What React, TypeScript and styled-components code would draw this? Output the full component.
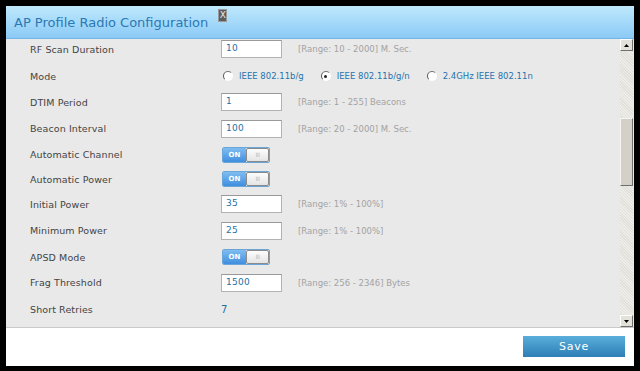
import React from 'react';
import styled, { createGlobalStyle } from 'styled-components';

const GlobalStyle = createGlobalStyle`
  html, body {
    margin: 0;
    padding: 0;
    background: #000;
  }
  body {
    font-family: "DejaVu Sans", Verdana, sans-serif;
  }
`;

const Screen = styled.div`
  width: 640px;
  height: 371px;
  padding: 6px;
  box-sizing: border-box;
  background: #000;
`;

const Dialog = styled.div`
  width: 628px;
  height: 360px;
  display: flex;
  flex-direction: column;
  background: #fff;
`;

const Header = styled.div`
  height: 32px;
  flex: none;
  display: flex;
  align-items: center;
  padding-left: 8px;
  background: linear-gradient(#bfe9fd, #8bcaf6);
  border-bottom: 1px solid #72b6e6;
`;

const Title = styled.h1`
  margin: 0;
  font-size: 13px;
  font-weight: normal;
  letter-spacing: 0;
  color: #2b78b4;
`;

const Close = styled.span`
  align-self: flex-start;
  margin: 3px 0 0 10px;
  width: 7px;
  height: 11px;
  background: #5c5c5c;
  border: 1px solid #9a9a9a;
  color: #e8e8e8;
  font-size: 9px;
  line-height: 11px;
  text-align: center;
`;

const Body = styled.div`
  height: 288px;
  flex: none;
  display: flex;
  background: #e9e9e9;
  border-bottom: 1px solid #c9c9c9;
`;

const Form = styled.div`
  flex: 1;
  overflow: hidden;
`;

const Rows = styled.div`
  margin-top: -4px;
  padding-left: 24px;
`;

const Row = styled.div<{ $h: number }>`
  height: ${p => p.$h}px;
  display: grid;
  grid-template-columns: 191px 1fr;
  align-items: center;
`;

const Label = styled.span`
  font-size: 9.5px;
  letter-spacing: 0.1px;
  color: #444;
`;

const Control = styled.div`
  display: flex;
  align-items: center;
`;

const Input = styled.div`
  width: 61px;
  height: 18px;
  box-sizing: border-box;
  border: 1px solid #b2b2b2;
  border-top-color: #999;
  background: #fff;
  padding-left: 4px;
  font-size: 9px;
  line-height: 15px;
  letter-spacing: 0.3px;
  color: #1f6fa6;
`;

const Hint = styled.span`
  margin-left: 16px;
  font-size: 8.5px;
  color: #a3a3a3;
`;

const Value = styled.span`
  font-size: 10px;
  color: #1f6fa6;
`;

const RadioItem = styled.label`
  display: flex;
  align-items: center;
  margin-right: 15px;
  font-size: 8.5px;
  color: #1f74ad;
`;

const RadioDot = styled.span<{ $on?: boolean }>`
  width: 8px;
  height: 8px;
  margin: 0 6px 0 2px;
  border-radius: 50%;
  background: #fff;
  border: 1px solid #fff;
  border-left-color: #555;
  border-top-color: #777;
  display: flex;
  align-items: center;
  justify-content: center;
  &::after {
    content: '';
    width: 3px;
    height: 3px;
    border-radius: 50%;
    background: ${p => (p.$on ? '#222' : 'transparent')};
  }
`;

const Toggle = styled.div`
  width: 48px;
  height: 16px;
  display: flex;
  box-sizing: border-box;
  border: 1px solid #6aa6d8;
  border-radius: 2px;
  overflow: hidden;
  margin-left: 1px;
`;

const ToggleOn = styled.span`
  width: 23px;
  background: linear-gradient(#7fbdf1, #3f8fdf);
  color: #fff;
  font-size: 7px;
  font-weight: bold;
  line-height: 14px;
  text-align: center;
`;

const ToggleKnob = styled.span`
  flex: 1;
  background: linear-gradient(#fdfdfd, #e4e4e4);
  border: 1px solid #8a8a8a;
  border-radius: 2px;
  color: #bbb;
  font-size: 6px;
  line-height: 12px;
  text-align: center;
  letter-spacing: -0.5px;
`;

const Scrollbar = styled.div`
  width: 13px;
  display: flex;
  flex-direction: column;
  background: repeating-linear-gradient(45deg, #eeede9 0 1px, #e2e0da 1px 2px);
  margin-right: 1px;
`;

const ScrollButton = styled.div`
  height: 12px;
  flex: none;
  box-sizing: border-box;
  background: #e4e1da;
  border: 1px solid #fff;
  border-right-color: #6f6f6f;
  border-bottom-color: #6f6f6f;
  display: flex;
  align-items: center;
  justify-content: center;
`;

const Track = styled.div`
  flex: 1;
`;

const Thumb = styled.div`
  height: 68px;
  box-sizing: border-box;
  background: #d4d0c8;
  border: 1px solid #f4f4f4;
  border-right-color: #6f6f6f;
  border-bottom-color: #6f6f6f;
`;

const Footer = styled.div`
  flex: 1;
  display: flex;
  justify-content: flex-end;
  align-items: flex-start;
  padding: 8px 9px 0 0;
`;

const SaveButton = styled.button`
  width: 102px;
  height: 21px;
  border: none;
  background: linear-gradient(#5aaedb, #2c7eb5);
  color: #fff;
  font-family: "DejaVu Sans", Verdana, sans-serif;
  font-size: 11px;
  letter-spacing: 0.8px;
  padding: 0;
`;

const Arrow = ({ up }: { up?: boolean }) => (
  <svg width="5" height="3" viewBox="0 0 5 3">
    <path d={up ? 'M0 3 L2.5 0 L5 3 Z' : 'M0 0 L2.5 3 L5 0 Z'} fill="#000" />
  </svg>
);

const Switch = () => (
  <Toggle>
    <ToggleOn>ON</ToggleOn>
    <ToggleKnob>III</ToggleKnob>
  </Toggle>
);

const App: React.FC = () => {
  const thumbTop = 67;
  return (
    <>
      <GlobalStyle />
      <Screen>
        <Dialog>
          <Header>
            <Title>AP Profile Radio Configuration</Title>
            <Close>X</Close>
          </Header>
          <Body>
            <Form>
              <Rows>
                <Row $h={28}>
                  <Label>RF Scan Duration</Label>
                  <Control>
                    <Input>10</Input>
                    <Hint>[Range: 10 - 2000] M. Sec.</Hint>
                  </Control>
                </Row>
                <Row $h={26}>
                  <Label>Mode</Label>
                  <Control>
                    <RadioItem><RadioDot />IEEE 802.11b/g</RadioItem>
                    <RadioItem><RadioDot $on />IEEE 802.11b/g/n</RadioItem>
                    <RadioItem><RadioDot />2.4GHz IEEE 802.11n</RadioItem>
                  </Control>
                </Row>
                <Row $h={26}>
                  <Label>DTIM Period</Label>
                  <Control>
                    <Input>1</Input>
                    <Hint>[Range: 1 - 255] Beacons</Hint>
                  </Control>
                </Row>
                <Row $h={27}>
                  <Label>Beacon Interval</Label>
                  <Control>
                    <Input>100</Input>
                    <Hint>[Range: 20 - 2000] M. Sec.</Hint>
                  </Control>
                </Row>
                <Row $h={25}>
                  <Label>Automatic Channel</Label>
                  <Control><Switch /></Control>
                </Row>
                <Row $h={24}>
                  <Label>Automatic Power</Label>
                  <Control><Switch /></Control>
                </Row>
                <Row $h={26}>
                  <Label>Initial Power</Label>
                  <Control>
                    <Input>35</Input>
                    <Hint>[Range: 1% - 100%]</Hint>
                  </Control>
                </Row>
                <Row $h={27}>
                  <Label>Minimum Power</Label>
                  <Control>
                    <Input>25</Input>
                    <Hint>[Range: 1% - 100%]</Hint>
                  </Control>
                </Row>
                <Row $h={26}>
                  <Label>APSD Mode</Label>
                  <Control><Switch /></Control>
                </Row>
                <Row $h={25}>
                  <Label>Frag Threshold</Label>
                  <Control>
                    <Input>1500</Input>
                    <Hint>[Range: 256 - 2346] Bytes</Hint>
                  </Control>
                </Row>
                <Row $h={28}>
                  <Label>Short Retries</Label>
                  <Control><Value>7</Value></Control>
                </Row>
              </Rows>
            </Form>
            <Scrollbar>
              <ScrollButton><Arrow up /></ScrollButton>
              <Track>
                <Thumb style={{ marginTop: thumbTop }} />
              </Track>
              <ScrollButton><Arrow /></ScrollButton>
            </Scrollbar>
          </Body>
          <Footer>
            <SaveButton>Save</SaveButton>
          </Footer>
        </Dialog>
      </Screen>
    </>
  );
};

export default App;
